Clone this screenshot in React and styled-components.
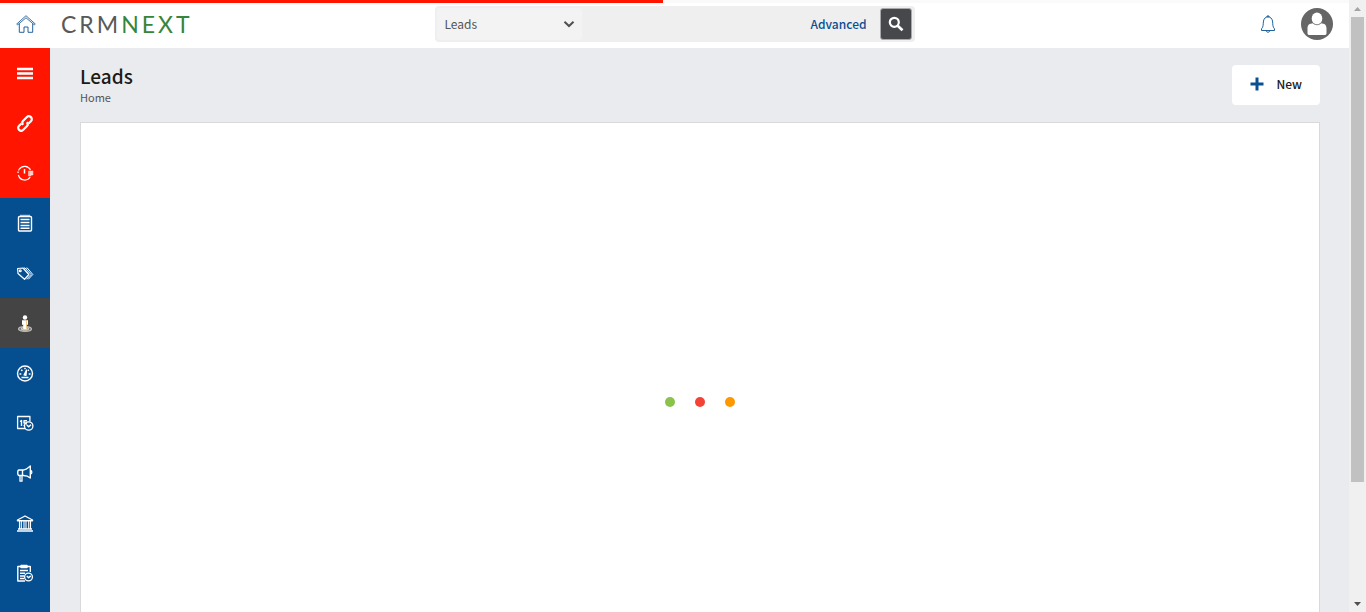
import React from "react";
import styled, { createGlobalStyle } from "styled-components";

const GlobalStyle = createGlobalStyle`
  *, *::before, *::after { box-sizing: border-box; }
  body {
    margin: 0;
    background: #e9ebef;
    color: #1a1a1a;
    font-family: "Noto Sans CJK SC", "Noto Sans", sans-serif;
    font-size: 12px;
    line-height: 20px;
  }
  button, input, select { font: inherit; }
`;

const Window = styled.div`
  display: flex;
  height: 100vh;
  overflow: hidden;
`;

const Page = styled.div`
  flex: 1;
  min-width: 0;
  display: flex;
  flex-direction: column;
`;

const ProgressTrack = styled.div`
  position: absolute;
  top: 0;
  left: 0;
  right: 17px;
  height: 3px;
  background: #fafafa;
`;

const ProgressBar = styled.div`
  width: 49.15%;
  height: 100%;
  background: #ff1500;
`;

const Header = styled.header`
  flex: none;
  height: 48px;
  display: grid;
  grid-template-columns: 1fr 480px 1fr;
  align-items: center;
  background: #fff;
`;

const Brand = styled.div`
  display: flex;
  align-items: center;
  padding-left: 16px;
  gap: 25px;
`;

const IconLink = styled.a`
  display: flex;
  color: #0a5291;
`;

const Logo = styled.a`
  color: #58595b;
  font-family: Lato, sans-serif;
  font-size: 23px;
  line-height: 24px;
  letter-spacing: 3px;
  text-decoration: none;
`;

const LogoAccent = styled.span`
  color: #37843b;
`;

const Search = styled.form`
  display: flex;
  align-items: center;
  height: 36px;
  padding: 2px 3px 2px 2px;
  border-radius: 4px;
  background: #efefef;
`;

const SelectWrap = styled.label`
  display: grid;
  align-items: center;
  width: 145px;
  height: 32px;
  border-radius: 3px;
  background: #f3f3f3;

  & > * { grid-area: 1 / 1; }
  svg { justify-self: end; margin-right: 7px; pointer-events: none; }
`;

const ModuleSelect = styled.select`
  appearance: none;
  width: 100%;
  height: 32px;
  padding: 0 24px 0 8px;
  border: 0;
  background: transparent;
  color: #555;
`;

const SearchInput = styled.input`
  flex: 1;
  min-width: 0;
  height: 32px;
  border: 0;
  background: transparent;
`;

const Advanced = styled.a`
  margin-right: 13px;
  color: #0a4f92;
  font-weight: 500;
  text-decoration: none;
`;

const SearchButton = styled.button`
  display: grid;
  place-items: center;
  width: 32px;
  height: 32px;
  padding: 0;
  border: 1px solid #a9a9ac;
  border-radius: 3px;
  background: #47484c;
`;

const Account = styled.div`
  display: flex;
  justify-content: flex-end;
  align-items: center;
  gap: 25px;
  padding-right: 16px;
`;

const PlainButton = styled.button`
  display: flex;
  padding: 0;
  border: 0;
  background: transparent;
  color: #0a5291;
`;

const Body = styled.div`
  flex: 1;
  min-height: 0;
  display: flex;
`;

const Sidebar = styled.nav`
  flex: none;
  width: 50px;
  overflow: hidden;
  background: #054f90;
`;

const tones = { action: "#ff1500", module: "#054f90", active: "#444" };

const NavItem = styled.a`
  display: grid;
  place-items: center;
  height: 50px;
  color: #fff;
  background: ${(p) => tones[p.$tone]};
`;

const Main = styled.main`
  flex: 1;
  min-width: 0;
  display: flex;
  flex-direction: column;
  padding: 17px 29px 0 30px;
`;

const TitleBar = styled.div`
  display: flex;
  justify-content: space-between;
  align-items: flex-start;
  margin-bottom: 15px;
`;

const Title = styled.h1`
  margin: 0;
  font-size: 19px;
  line-height: 22px;
  font-weight: 500;
`;

const Crumb = styled.a`
  display: block;
  color: #555;
  font-size: 11px;
  line-height: 20px;
  text-decoration: none;
`;

const NewButton = styled.button`
  display: flex;
  align-items: center;
  gap: 12px;
  height: 40px;
  padding: 0 18px 2px;
  border: 0;
  border-radius: 4px;
  background: #fff;
  color: #1a1a1a;
  font-weight: 500;
`;

const Panel = styled.section`
  flex: 1;
  display: flex;
  justify-content: center;
  align-items: center;
  gap: 20px;
  padding-top: 68px;
  border: 1px solid #d9d9db;
  border-bottom: 0;
  background: #fff;
`;

const Dot = styled.span`
  width: 10px;
  height: 10px;
  border-radius: 50%;
  background: ${(p) => p.$color};
`;

const Scrollbar = styled.div`
  flex: none;
  width: 17px;
  display: flex;
  flex-direction: column;
  background: #f0f0f0;
`;

const ScrollArrow = styled.span`
  display: grid;
  place-items: center;
  height: 17px;
`;

const ScrollTrack = styled.div`
  flex: 1;
  padding: 0 2px;
`;

const ScrollThumb = styled.div`
  height: 80.5%;
  background: #c1c1c1;
`;

function Glyph({ size = 18, stroke = 1.2, children }) {
  return (
    <svg
      width={size}
      height={size}
      viewBox="0 0 18 18"
      fill="none"
      stroke="currentColor"
      strokeWidth={stroke}
      strokeLinejoin="round"
      aria-hidden="true"
    >
      {children}
    </svg>
  );
}

const MenuIcon = () => (
  <Glyph>
    <path d="M1 5h16M1 9.500h16M1 14h16" strokeWidth="2.500" />
  </Glyph>
);

const LinkIcon = () => (
  <Glyph stroke={2.2}>
    <path d="M7.3 10.8C6 9.5 6.1 7.8 7.2 6.700L10.700 3.200C12 1.900 13.700 1.900 14.900 3.100C16.100 4.300 16.100 6 14.900 7.200L12.500 9.500" />
    <path d="M10.700 8.200C12 9.500 11.900 11.200 10.800 12.300L7.300 15.800C6 17.100 4.300 17.100 3.100 15.900C1.900 14.700 1.900 13 3.100 11.800L5.500 9.500" />
  </Glyph>
);

const TimerIcon = () => (
  <Glyph>
    <path d="M3.300 5.200A6.500 6.500 0 0 1 14.500 6M14.200 13A6.500 6.500 0 0 1 2.400 11" />
    <path d="M3.300 5.200A6.500 6.500 0 0 0 2 9" strokeDasharray="1.500 1" />
    <path d="M8.500 5v4.500" strokeWidth="1.500" />
    <path d="M12.500 7h2.500v5h-2.500zM15 7h2v4h-2z" fill="currentColor" fillOpacity="0.700" strokeWidth="0.400" />
  </Glyph>
);

const NotepadIcon = () => (
  <Glyph>
    <rect x="2.500" y="2.500" width="13" height="14.500" rx="1" strokeWidth="1.400" />
    <path d="M5 0.800v2M7 0.800v2M9 0.800v2M11 0.800v2M13 0.800v2" />
    <path d="M4.500 5.500h9M4.500 8.500h9M4.500 11.500h9M4.500 14.300h9" strokeWidth="1.400" />
  </Glyph>
);

const TagsIcon = () => (
  <Glyph>
    <path d="M1.600 4.500L7 4L12.800 10.500L8.500 15.300L2 9.500Z" />
    <circle cx="4.300" cy="6.800" r="0.900" />
    <path d="M8 4h1l6 6.500L10.500 15.300M10.300 4h1L16.800 10.500L12.300 15.300" strokeWidth="1" />
  </Glyph>
);

const LeadIcon = () => (
  <Glyph>
    <ellipse cx="9" cy="15" rx="6.500" ry="2.300" stroke="#bdbdbd" fill="#777" />
    <ellipse cx="9" cy="14.700" rx="3.500" ry="1.200" stroke="#e2d4b0" />
    <path d="M6 6.200h6v4.500h-1.200v4.500H7.200v-4.500H6z" fill="currentColor" stroke="none" />
    <circle cx="9" cy="3.500" r="2.200" fill="currentColor" stroke="none" />
    <path d="M10.500 6.200v8.500" stroke="#efaa35" strokeWidth="0.600" />
  </Glyph>
);

const GaugeIcon = () => (
  <Glyph>
    <circle cx="9" cy="9.500" r="7.500" strokeWidth="1.400" />
    <path d="M3.500 10h1.800M12.700 10h1.800M5.200 5.700l1.200 1.200M9 3.800v1.500M12.800 5.700l-1 1M5.500 13.500h7" strokeWidth="1.500" />
    <path d="M8 11L10.500 6L10 11.500Z" fill="currentColor" />
  </Glyph>
);

const CalendarIcon = () => (
  <Glyph>
    <path d="M9 14.500H1.600V2.500h12.300v5" strokeWidth="1.300" />
    <path d="M4 7.500l1.500-1v5.500M11 6.700H8v2.300c2-0.300 2.500 0.500 2.300 1.700M7.500 11.500h1" strokeWidth="1.400" />
    <circle cx="12.700" cy="12" r="4.200" strokeWidth="1.300" />
    <path d="M10.800 11l1.900 1.800l2.300-2" strokeWidth="1.500" />
  </Glyph>
);

const MegaphoneIcon = () => (
  <Glyph>
    <path d="M3 6h4.500C10 6 12 4 14.300 2v12C12 12 10 11.500 7.500 11.500H3C1.300 11.500 1.300 6 3 6zM6.500 6V11.500" strokeWidth="1.400" />
    <path d="M4 11.500v5.700h2v-5.500M14.500 6.500C16.300 7 16.300 9.500 14.500 10" strokeWidth="1.300" />
  </Glyph>
);

const BankIcon = () => (
  <Glyph>
    <path d="M1.500 6L9 2l7.500 4v0.800h-15zM2 15h14M1 17h16" strokeWidth="1.400" />
    <path d="M3.500 7v8M5.300 7v8M8 7v8M10 7v8M12.700 7v8M14.500 7v8" strokeWidth="1.100" />
  </Glyph>
);

const TaskIcon = () => (
  <Glyph>
    <path d="M9 17H1.800V2.500h12.500v5.500" strokeWidth="1.400" />
    <path d="M5 1.500h6v2H5zM4 6.500h8M4 9.300h5M4 12h4M4 14.500h4" strokeWidth="1.400" />
    <circle cx="12.500" cy="13" r="3.900" strokeWidth="1.300" />
    <path d="M10.800 12l1.800 1.700l2.100-1.800" strokeWidth="1.400" />
  </Glyph>
);

const HomeIcon = () => (
  <svg width="20" height="18" viewBox="0 0 20 18" fill="none" stroke="currentColor" strokeLinejoin="round" aria-hidden="true">
    <path d="M0.700 9L10 0.700L19.300 9L18.300 9.800L10 2.800L1.700 9.800Z" strokeWidth="0.800" />
    <path d="M3.300 8.600V17.300H8V12H12V17.300H16.700V8.600" strokeWidth="0.900" />
  </svg>
);

const BellIcon = () => (
  <svg width="16" height="18" viewBox="0 0 16 18" fill="none" stroke="currentColor" strokeLinejoin="round" aria-hidden="true">
    <path d="M1.500 15.500V13.800C3.600 12 3 9 3.500 6C4 3.300 5.500 2 8 2S12 3.300 12.500 6C13 9 12.400 12 14.500 13.800V15.500Z" strokeWidth="0.900" />
    <path d="M7 2V1h2v1M6.200 15.700C6.500 17.700 9.500 17.700 9.800 15.700" strokeWidth="1" />
  </svg>
);

const AvatarIcon = () => (
  <svg width="32" height="32" viewBox="0 0 32 32" aria-hidden="true">
    <circle cx="16" cy="16" r="16" fill="#666" />
    <path d="M6.500 25V20.500C6.500 17 8.500 15.500 12 15.300C14.500 17.500 17.500 17.500 20 15.300C23.500 15.500 25.500 17 25.500 20.500V25C25.500 26.400 24.800 27 23.500 27H8.500C7.200 27 6.500 26.400 6.500 25Z" fill="#fff" />
    <ellipse cx="16" cy="10.500" rx="5.300" ry="6" fill="#fff" />
    <path d="M11.500 14.500C13.500 17.500 18.500 17.500 20.500 14.500" fill="none" stroke="#888" strokeWidth="0.800" />
  </svg>
);

const SearchIcon = () => (
  <svg width="16" height="16" viewBox="0 0 16 16" fill="none" stroke="#fff" aria-hidden="true">
    <circle cx="6.300" cy="6.300" r="4.500" strokeWidth="2.200" />
    <path d="M9.700 9.700L14.500 14.200" strokeWidth="2.700" />
  </svg>
);

const navItems = [
  ["Menu", "action", MenuIcon],
  ["Quick links", "action", LinkIcon],
  ["Recent", "action", TimerIcon],
  ["Notes", "module", NotepadIcon],
  ["Offers", "module", TagsIcon],
  ["Leads", "active", LeadIcon],
  ["Dashboard", "module", GaugeIcon],
  ["Calendar", "module", CalendarIcon],
  ["Campaigns", "module", MegaphoneIcon],
  ["Accounts", "module", BankIcon],
  ["Tasks", "module", TaskIcon],
];

export default function App() {
  return (
    <>
      <GlobalStyle />
      <Window>
        <Page>
          <Header>
            <Brand>
              <IconLink href="#home" aria-label="Home"><HomeIcon /></IconLink>
              <Logo href="#home">CRM<LogoAccent>NEXT</LogoAccent></Logo>
            </Brand>
            <Search onSubmit={(e) => e.preventDefault()}>
              <SelectWrap>
                <ModuleSelect aria-label="Search in" defaultValue="Leads">
                  <option>Leads</option>
                </ModuleSelect>
                <svg width="12" height="8" viewBox="0 0 12 8" fill="none" stroke="#505050" strokeWidth="2" aria-hidden="true">
                  <path d="M1.500 1.700L6 6L10.500 1.700" />
                </svg>
              </SelectWrap>
              <SearchInput type="text" aria-label="Search" />
              <Advanced href="#advanced">Advanced</Advanced>
              <SearchButton type="submit" aria-label="Search"><SearchIcon /></SearchButton>
            </Search>
            <Account>
              <PlainButton type="button" aria-label="Notifications"><BellIcon /></PlainButton>
              <PlainButton type="button" aria-label="Profile"><AvatarIcon /></PlainButton>
            </Account>
          </Header>
          <ProgressTrack><ProgressBar /></ProgressTrack>
          <Body>
            <Sidebar aria-label="Modules">
              {navItems.map(([name, tone, Icon]) => (
                <NavItem key={name} href="#module" aria-label={name} $tone={tone}>
                  <Icon />
                </NavItem>
              ))}
            </Sidebar>
            <Main>
              <TitleBar>
                <div>
                  <Title>Leads</Title>
                  <Crumb href="#home">Home</Crumb>
                </div>
                <NewButton type="button">
                  <svg width="14" height="14" viewBox="0 0 14 14" stroke="#0a4f92" strokeWidth="3" aria-hidden="true">
                    <path d="M7 0.500v13M0.500 7h13" />
                  </svg>
                  New
                </NewButton>
              </TitleBar>
              <Panel aria-label="Loading leads">
                <Dot $color="#8bc34a" />
                <Dot $color="#f44336" />
                <Dot $color="#ff9800" />
              </Panel>
            </Main>
          </Body>
        </Page>
        <Scrollbar aria-hidden="true">
          <ScrollArrow>
            <svg width="7" height="4" viewBox="0 0 7 4"><path d="M0 4L3.500 0L7 4Z" fill="#a3a3a3" /></svg>
          </ScrollArrow>
          <ScrollTrack><ScrollThumb /></ScrollTrack>
          <ScrollArrow>
            <svg width="7" height="4" viewBox="0 0 7 4"><path d="M0 0L3.500 4L7 0Z" fill="#505050" /></svg>
          </ScrollArrow>
        </Scrollbar>
      </Window>
    </>
  );
}
